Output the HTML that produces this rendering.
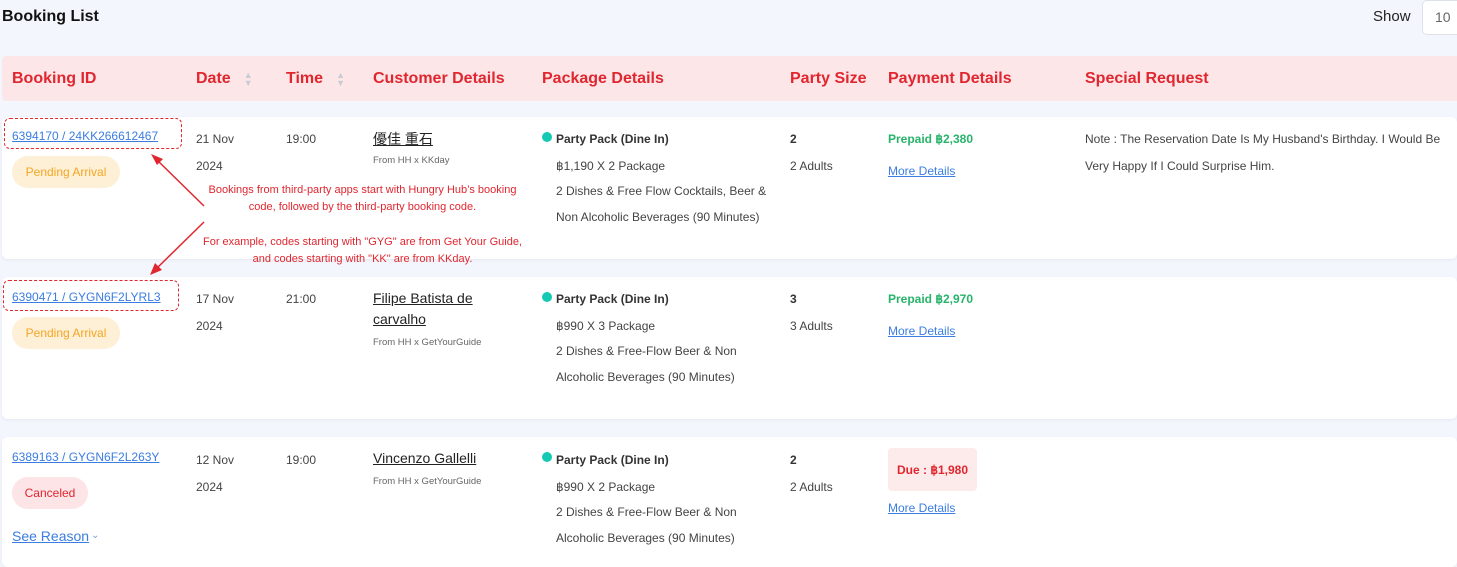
<!DOCTYPE html>
<html><head><meta charset="utf-8"><style>
*{margin:0;padding:0;box-sizing:border-box}
body{width:1457px;height:556px;overflow:hidden;background:#f3f7fd;font-family:"Liberation Sans","Noto Sans CJK JP",sans-serif;position:relative;color:#444}
.a{position:absolute;white-space:nowrap}
.h{font-weight:bold;color:#e0262f;font-size:16px;top:70px}
.card{position:absolute;left:2px;right:0;background:#fff;border-radius:6px;box-shadow:0 1px 3px rgba(0,0,0,.06)}
.t{font-size:12px;color:#444}
.lnk{color:#3b7de0;text-decoration:underline;font-size:12px}
.b{font-weight:bold;color:#333}
.dot{position:absolute;width:10px;height:10px;border-radius:50%;background:#16c9b4}
.ann{position:absolute;color:#e0262f;font-size:11px;text-align:center;line-height:17px}
.box{position:absolute;border:1px dashed #e0262f;border-radius:6px}
.pill{position:absolute;border-radius:16px;font-size:12px;display:flex;align-items:center;justify-content:center}
.srt{display:inline-block;margin-left:13px;vertical-align:middle;color:#c8ccd4;font-size:9px;line-height:8px}
</style></head><body>
<div class="a" style="left:2px;top:8px;font-size:16px;font-weight:bold;color:#111">Booking List</div>
<div class="a" style="left:1373px;top:8px;font-size:15px;color:#222">Show</div>
<div class="a" style="left:1422px;top:0px;width:50px;height:35px;background:#fff;border:1px solid #dde2ea;border-radius:5px;font-size:14px;color:#666;padding:8px 0 0 12px">10</div>

<div class="a" style="left:2px;top:56px;width:1460px;height:45px;background:#fde6e8;border-radius:4px"></div>
<div class="a h" style="left:12px">Booking ID</div>
<div class="a h" style="left:196px">Date<span class="srt">▲<br>▼</span></div>
<div class="a h" style="left:286px">Time<span class="srt">▲<br>▼</span></div>
<div class="a h" style="left:373px">Customer Details</div>
<div class="a h" style="left:542px">Package Details</div>
<div class="a h" style="left:790px">Party Size</div>
<div class="a h" style="left:888px">Payment Details</div>
<div class="a h" style="left:1085px">Special Request</div>

<div class="card" style="top:117px;height:142px"></div>
<div class="card" style="top:277px;height:142px"></div>
<div class="card" style="top:437px;height:130px"></div>

<!-- row1 -->
<div class="a lnk" style="left:12px;top:129px">6394170 / 24KK266612467</div>
<div class="box" style="left:4px;top:118px;width:178px;height:31px"></div>
<div class="pill" style="left:12px;top:156px;width:108px;height:32px;background:#fdf0d6;color:#f5a623">Pending Arrival</div>
<div class="a t" style="left:196px;top:132px">21 Nov</div>
<div class="a t" style="left:196px;top:159px">2024</div>
<div class="a t" style="left:286px;top:132px">19:00</div>
<div class="a" style="left:373px;top:129px;font-size:14px;color:#222;text-decoration:underline">優佳 重石</div>
<div class="a" style="left:373px;top:155px;font-size:9.5px;color:#666">From HH x KKday</div>
<div class="dot" style="left:542px;top:132px"></div>
<div class="a t b" style="left:556px;top:132px">Party Pack (Dine In)</div>
<div class="a t" style="left:556px;top:159px">฿1,190 X 2 Package</div>
<div class="a t" style="left:556px;top:184px">2 Dishes &amp; Free Flow Cocktails, Beer &amp;</div>
<div class="a t" style="left:556px;top:210px">Non Alcoholic Beverages (90 Minutes)</div>
<div class="a t b" style="left:790px;top:132px">2</div>
<div class="a t" style="left:790px;top:159px">2 Adults</div>
<div class="a t" style="left:888px;top:132px;color:#27b36a;font-weight:bold">Prepaid ฿2,380</div>
<div class="a lnk" style="left:888px;top:164px">More Details</div>
<div class="a t" style="left:1085px;top:132px">Note : The Reservation Date Is My Husband's Birthday. I Would Be</div>
<div class="a t" style="left:1085px;top:159px">Very Happy If I Could Surprise Him.</div>

<!-- annotation -->
<div class="ann" style="left:180px;top:182px;width:365px">Bookings from third-party apps start with Hungry Hub’s booking<br>code, followed by the third-party booking code.</div>
<div class="ann" style="left:180px;top:234px;width:365px">For example, codes starting with "GYG" are from Get Your Guide,<br>and codes starting with "KK" are from KKday.</div>
<svg class="a" style="left:0;top:0" width="300" height="300">
<g stroke="#e0262f" stroke-width="1.5" fill="#e0262f">
<line x1="204" y1="206" x2="156" y2="159"/>
<polygon points="151,154 163,159 157,165" stroke="none"/>
<line x1="204" y1="222" x2="155" y2="270"/>
<polygon points="150,275 155,263 162,270" stroke="none"/>
</g></svg>

<!-- row2 -->
<div class="a lnk" style="left:12px;top:290px">6390471 / GYGN6F2LYRL3</div>
<div class="box" style="left:3px;top:280px;width:176px;height:31px"></div>
<div class="pill" style="left:12px;top:317px;width:108px;height:32px;background:#fdf0d6;color:#f5a623">Pending Arrival</div>
<div class="a t" style="left:196px;top:292px">17 Nov</div>
<div class="a t" style="left:196px;top:319px">2024</div>
<div class="a t" style="left:286px;top:292px">21:00</div>
<div class="a" style="left:373px;top:290px;font-size:14px;color:#222;text-decoration:underline">Filipe Batista de</div>
<div class="a" style="left:373px;top:311px;font-size:14px;color:#222;text-decoration:underline">carvalho</div>
<div class="a" style="left:373px;top:337px;font-size:9.5px;color:#666">From HH x GetYourGuide</div>
<div class="dot" style="left:542px;top:292px"></div>
<div class="a t b" style="left:556px;top:292px">Party Pack (Dine In)</div>
<div class="a t" style="left:556px;top:319px">฿990 X 3 Package</div>
<div class="a t" style="left:556px;top:344px">2 Dishes &amp; Free-Flow Beer &amp; Non</div>
<div class="a t" style="left:556px;top:370px">Alcoholic Beverages (90 Minutes)</div>
<div class="a t b" style="left:790px;top:292px">3</div>
<div class="a t" style="left:790px;top:319px">3 Adults</div>
<div class="a t" style="left:888px;top:292px;color:#27b36a;font-weight:bold">Prepaid ฿2,970</div>
<div class="a lnk" style="left:888px;top:324px">More Details</div>

<!-- row3 -->
<div class="a lnk" style="left:12px;top:450px">6389163 / GYGN6F2L263Y</div>
<div class="pill" style="left:12px;top:477px;width:76px;height:32px;background:#fde4e6;color:#e0262f">Canceled</div>
<div class="a" style="left:12px;top:528px;font-size:14px;color:#3b7de0;text-decoration:underline">See Reason</div>
<div class="a" style="left:91px;top:530px;font-size:10px;color:#7a9ed8">⌄</div>
<div class="a t" style="left:196px;top:453px">12 Nov</div>
<div class="a t" style="left:196px;top:480px">2024</div>
<div class="a t" style="left:286px;top:453px">19:00</div>
<div class="a" style="left:373px;top:450px;font-size:14px;color:#222;text-decoration:underline">Vincenzo Gallelli</div>
<div class="a" style="left:373px;top:476px;font-size:9.5px;color:#666">From HH x GetYourGuide</div>
<div class="dot" style="left:542px;top:452px"></div>
<div class="a t b" style="left:556px;top:453px">Party Pack (Dine In)</div>
<div class="a t" style="left:556px;top:480px">฿990 X 2 Package</div>
<div class="a t" style="left:556px;top:505px">2 Dishes &amp; Free-Flow Beer &amp; Non</div>
<div class="a t" style="left:556px;top:531px">Alcoholic Beverages (90 Minutes)</div>
<div class="a t b" style="left:790px;top:453px">2</div>
<div class="a t" style="left:790px;top:480px">2 Adults</div>
<div class="a" style="left:888px;top:448px;width:89px;height:43px;background:#fdeaea;border-radius:4px;color:#e0262f;font-size:12px;font-weight:bold;display:flex;align-items:center;justify-content:center">Due : ฿1,980</div>
<div class="a lnk" style="left:888px;top:501px">More Details</div>
</body></html>
